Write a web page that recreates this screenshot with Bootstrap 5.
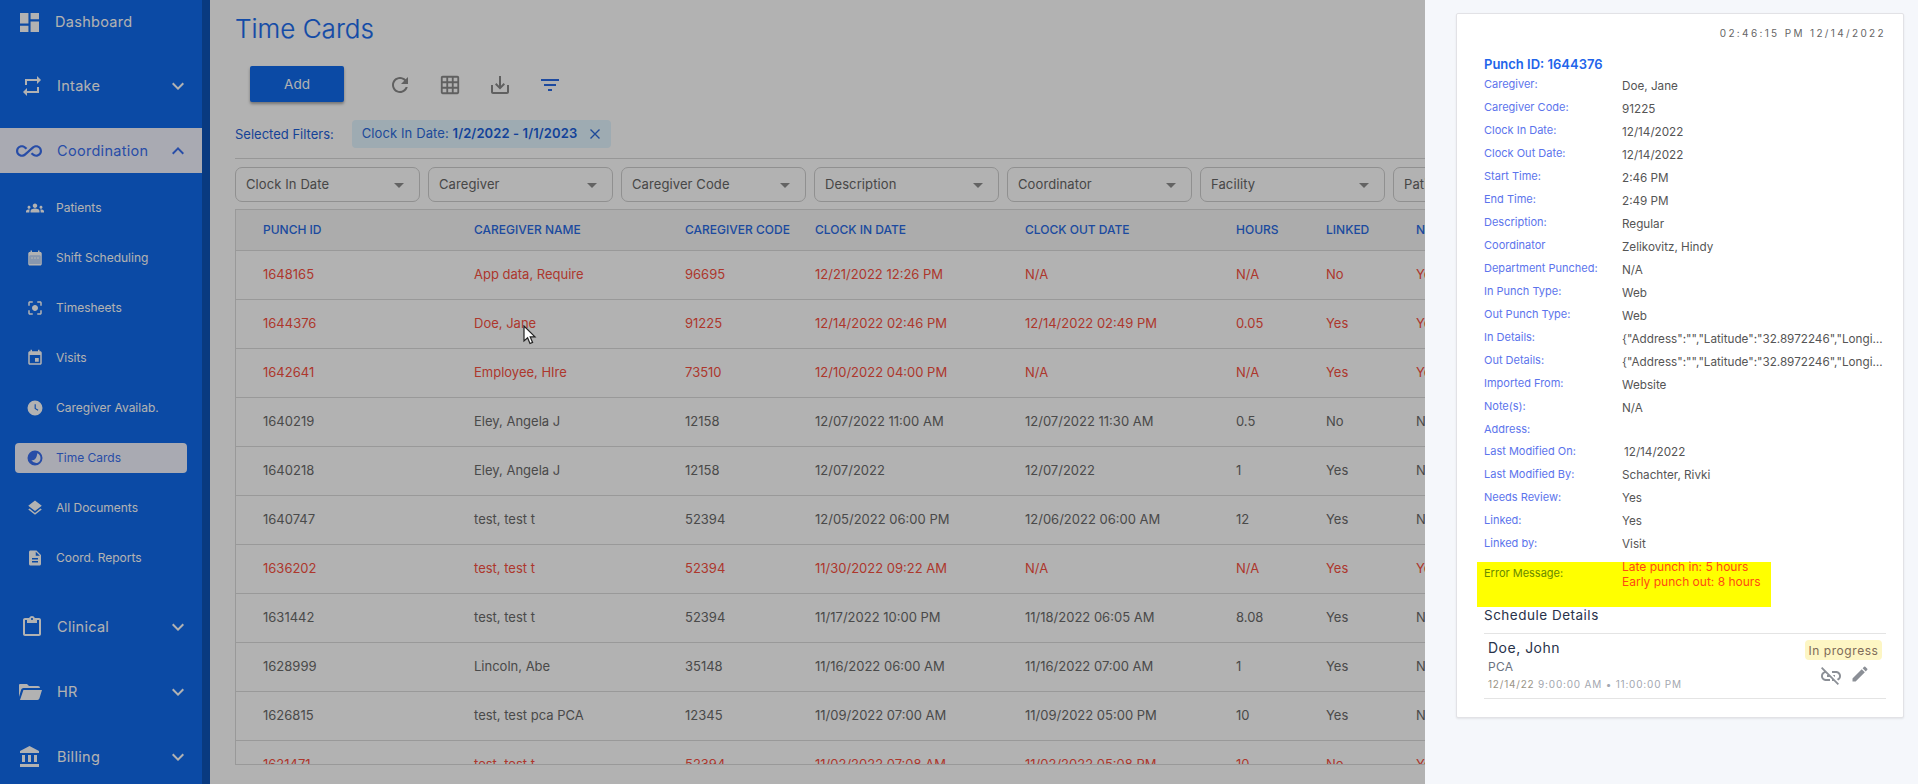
<!DOCTYPE html>
<html lang="en"><head><meta charset="utf-8"><title>Time Cards</title>
<link href="https://cdn.jsdelivr.net/npm/bootstrap@5.3.0/dist/css/bootstrap.min.css" rel="stylesheet">
<style>
html,body{height:784px;overflow:hidden}
body{font-family:Inter,"Liberation Sans",sans-serif;background:#fff;color:#555;position:relative;width:1918px}
.shell{height:784px}
.side{width:210px;flex:none;background:#106aec;border-right:8px solid #0e54b8;height:784px;overflow:hidden;color:#fff}
.tlink{height:45px;margin-bottom:20px;padding-left:20px;font-size:14.5px;letter-spacing:.3px;width:202px;position:relative}
.tlink .ti{width:37px;flex:none}
.tlink .chev{position:absolute;left:166px}
.tlink.on{background:#f2f4ff;color:#3a6ff0}
.tlink.first{height:43px;margin-bottom:20px;font-size:14.5px}
.tlink.first .ti{width:35px}
.tlink.wideic{padding-left:18px}
.tlink.wideic .ti{width:39px}
.tlink.on{padding-left:16px}
.tlink.on .ti{width:41px}
.sublist{padding:0 0 11px 15px}
.sublink{height:30px;margin-bottom:20px;width:172px;border-radius:4px;padding-left:11px;font-size:12px}
.sublink .si{width:30px;flex:none}
.sublink.on{background:#f2f4ff;color:#3a6ff0}
.workspace{flex:1;min-width:0;padding:0 0 0 25px;overflow:hidden}
.pagetitle{font-size:26px;font-weight:300;color:#1a6cf0;height:58px;margin:0;padding-top:12px;line-height:34px;-webkit-text-stroke:.2px}
.addbtn{width:94px;height:36px;background:#106aec;border:0;border-radius:2px;color:#fff;font-size:13.5px;box-shadow:0 2px 3px rgba(0,0,0,.35);margin:8px 0 0 15px;padding:0}
.tools{height:54px;gap:44px}
.toolset{gap:26px;margin-top:15px}
.toolic{width:24px;height:24px}
.filtline{height:39px;margin-top:8px;border-bottom:1px solid #d8d8d8;gap:18px;font-size:13px;color:#1e5fd8;width:1700px}
.filtlabel{line-height:28px}
.chipx{background:#e3f5ff;border-radius:4px;height:28px;padding:0 10px;font-size:13px;letter-spacing:.1px;color:#2c6bdc;gap:12px}
.chipx b{font-weight:600;color:#1a5fdc}
.fsel{width:185px;height:35px;border:1px solid #cfcfcf;border-radius:7px;padding:1px 10px 0;font-size:13px;color:#666;flex:none;letter-spacing:.1px}
.fsel i{width:0;height:0;border-left:5px solid transparent;border-right:5px solid transparent;border-top:5px solid #8f8f8f;display:block;margin-right:5px}
.fselrow{gap:8px;margin-top:8px;height:42px;width:1700px}
.gridwrap{width:1700px;height:556px;overflow:hidden;border-left:1px solid #dcdcdc;border-bottom:1px solid #dcdcdc;border-top:1px solid #dcdcdc;position:relative}
table.tc{table-layout:fixed;width:1500px;margin:0;font-size:13px;border-collapse:collapse}
table.tc th{height:40px;background:#f6f6f6;font-weight:500;color:#2a6be4;border-bottom:1px solid #dcdcdc;padding:0;text-transform:uppercase;font-size:12px;vertical-align:middle;white-space:nowrap}
table.tc td{height:49px;padding:0;border-bottom:1px solid #dcdcdc;vertical-align:middle;color:#6a6a6a;white-space:nowrap;background:transparent;box-shadow:none}
table.tc th:first-child,table.tc td:first-child{padding-left:27px}
table.tc tr.late td{color:#f8503f}
.c1{width:238px}.c2{width:211px}.c3{width:130px}.c4{width:210px}.c5{width:211px}.c6{width:90px}.c7{width:90px}.c8{width:320px}
.scrim{position:absolute;inset:0;background:rgba(0,0,0,.3);z-index:5}
.pointer{position:absolute;left:523px;top:325px;z-index:6}
.drawer{position:absolute;left:1425px;top:0;width:493px;height:784px;background:#f5f7fb;z-index:10;padding:13px 14px 0 31px}
.pcard{height:705px;background:#fff;border:1px solid #e2e2e6;box-shadow:0 1px 2px rgba(0,0,0,.08);border-radius:2px;padding:12px 17px 0 27px}
.stamp{font-size:10px;letter-spacing:2.35px;text-align:right;color:#666;line-height:14px;margin-bottom:16px}
.pid{font-size:13px;font-weight:600;color:#2264ea;line-height:16px;margin-bottom:3px}
.drow{height:23px;flex:none}
.drow.tight{height:22px}
.drow.tight~.drow .dv{padding-top:0}
.dl{width:138px;flex:none;font-size:11px;color:#5c74ec;line-height:18px}
.dv{font-size:11.7px;color:#555;line-height:20px;padding-top:1px;min-width:0;width:265px;white-space:nowrap;overflow:hidden;text-overflow:ellipsis}
.dv.nudged{padding-left:2px}
.errbox{background:#ff0;width:294px;height:45px;margin:5px 0 0 -7px;padding-left:7px}
.errbox .dl{color:#6a8a00;padding-top:2px}
.errbox .dv{color:#ff4a12;font-size:12px;line-height:15px;padding-top:0;width:auto;margin-top:-3px;overflow:visible}
.schedhead{font-size:13.5px;letter-spacing:.5px;color:#28324a;line-height:17px;margin-bottom:9px}
.schedrow{border-top:1px solid #e4e4e4;border-bottom:1px solid #e4e4e4;height:66px;width:402px;padding:5px 4px 0 4px}
.sname{font-size:14px;letter-spacing:.5px;color:#28324a;line-height:18px}
.srole{font-size:12px;letter-spacing:.3px;color:#6b7280;line-height:20px}
.stime{font-size:10px;letter-spacing:.8px;color:#a3a7b0;line-height:14px}
.stime span{color:#9a9486}
.pillx{background:#fdf6c4;color:#7d6b58;font-size:12px;letter-spacing:.55px;border-radius:4px;height:20px;line-height:21px;width:77px;text-align:center;margin-top:1px}
.acts{gap:7px;padding:4px 12px 0 0}
</style></head>
<body>
<div class="d-flex shell">
 <aside class="side">
  <div class="tlink first d-flex align-items-center"><span class="ti"><svg width="19" height="19" viewBox="3 3 18 18" fill="#fff"><path d="M3 13h8V3H3zm0 8h8v-6H3zm10 0h8V11h-8zm0-18v6h8V3z"/></svg></span><span>Dashboard</span></div>
  <div class="tlink d-flex align-items-center"><span class="ti"><svg width="24" height="24" viewBox="0 0 24 24" fill="#fff"><path d="M7 7h10v3l4-4-4-4v3H5v6h2zm10 10H7v-3l-4 4 4 4v-3h12v-6h-2z"/></svg></span><span>Intake</span><svg class="chev" width="24" height="24" viewBox="0 0 24 24" fill="#fff"><path d="M7.41 8.59 12 13.17l4.59-4.58L18 10l-6 6-6-6z"/></svg></div>
  <div class="tlink on d-flex align-items-center"><span class="ti"><svg width="26" height="26" viewBox="0 0 24 24" fill="#3a6ff0"><path d="M18.6 6.62c-1.44 0-2.8.56-3.77 1.53L12 10.66 10.48 12h.01L7.8 14.39c-.64.64-1.49.99-2.4.99-1.87 0-3.39-1.51-3.39-3.38S3.53 8.62 5.4 8.62c.91 0 1.76.35 2.44 1.03l1.13 1 1.51-1.34L9.22 8.2C8.2 7.18 6.84 6.62 5.4 6.62 2.42 6.62 0 9.04 0 12s2.42 5.38 5.4 5.38c1.44 0 2.8-.56 3.77-1.53l2.83-2.5.01.01L13.52 12h-.01l2.69-2.39c.64-.64 1.49-.99 2.4-.99 1.87 0 3.39 1.51 3.39 3.38s-1.52 3.38-3.39 3.38c-.9 0-1.76-.35-2.44-1.03l-1.14-1.01-1.51 1.34 1.27 1.12c1.02 1.01 2.37 1.57 3.82 1.57 2.98 0 5.4-2.41 5.4-5.38s-2.42-5.37-5.4-5.37z"/></svg></span><span>Coordination</span><svg class="chev" width="24" height="24" viewBox="0 0 24 24" fill="#3a6ff0"><path d="M7.41 15.41 12 10.83l4.59 4.58L18 14l-6-6-6 6z"/></svg></div>
  <div class="sublist">
   <div class="sublink d-flex align-items-center"><span class="si"><svg width="18" height="18" viewBox="0 0 24 24" fill="#fff"><path d="M12 12.75c1.63 0 3.07.39 4.24.9 1.08.48 1.76 1.56 1.76 2.73V18H6v-1.61c0-1.18.68-2.26 1.76-2.73 1.17-.52 2.61-.91 4.24-.91zM4 13c1.1 0 2-.9 2-2s-.9-2-2-2-2 .9-2 2 .9 2 2 2zm1.13 1.1c-.37-.06-.74-.1-1.13-.1-.99 0-1.93.21-2.78.58C.48 14.9 0 15.62 0 16.43V18h4.5v-1.61c0-.83.23-1.61.63-2.29zM20 13c1.1 0 2-.9 2-2s-.9-2-2-2-2 .9-2 2 .9 2 2 2zm4 3.43c0-.81-.48-1.53-1.22-1.85-.85-.37-1.79-.58-2.78-.58-.39 0-.76.04-1.13.1.4.68.63 1.46.63 2.29V18H24v-1.57zM12 6c1.66 0 3 1.34 3 3s-1.34 3-3 3-3-1.34-3-3 1.34-3 3-3z"/></svg></span>Patients</div>
   <div class="sublink d-flex align-items-center"><span class="si"><svg width="18" height="18" viewBox="0 0 24 24" fill="#fff"><path d="M9 11H7v2h2v-2zm4 0h-2v2h2v-2zm4 0h-2v2h2v-2zm2-7h-1V2h-2v2H8V2H6v2H5c-1.11 0-1.99.9-1.99 2L3 20c0 1.1.89 2 2 2h14c1.1 0 2-.9 2-2V6c0-1.1-.9-2-2-2zm0 16H5V9h14v11z"/><path d="M5 9h14v11H5z" opacity=".75"/></svg></span>Shift Scheduling</div>
   <div class="sublink d-flex align-items-center"><span class="si"><svg width="18" height="18" viewBox="0 0 24 24" fill="#fff"><path d="M5 15H3v4c0 1.1.9 2 2 2h4v-2H5v-4zM5 5h4V3H5c-1.1 0-2 .9-2 2v4h2V5zm14-2h-4v2h4v4h2V5c0-1.1-.9-2-2-2zm0 16h-4v2h4c1.1 0 2-.9 2-2v-4h-2v4zM12 8c-2.21 0-4 1.79-4 4s1.79 4 4 4 4-1.79 4-4-1.79-4-4-4z"/></svg></span>Timesheets</div>
   <div class="sublink d-flex align-items-center"><span class="si"><svg width="18" height="18" viewBox="0 0 24 24" fill="#fff"><path d="M17 12h-5v5h5v-5zM16 1v2H8V1H6v2H5c-1.11 0-1.99.9-1.99 2L3 19c0 1.1.89 2 2 2h14c1.1 0 2-.9 2-2V5c0-1.1-.9-2-2-2h-1V1h-2zm3 18H5V8h14v11z"/></svg></span>Visits</div>
   <div class="sublink d-flex align-items-center"><span class="si"><svg width="18" height="18" viewBox="0 0 24 24" fill="#fff"><path fill-rule="evenodd" d="M12 2a10 10 0 1 0 0 20 10 10 0 0 0 0-20zm-.5 5H13v5.2l3.5 2.1-.8 1.2L11.5 13z"/></svg></span>Caregiver Availab.</div>
   <div class="sublink on d-flex align-items-center"><span class="si"><svg width="18" height="18" viewBox="0 0 24 24" fill="#3a6ff0"><path fill-rule="evenodd" d="M12 2a10 10 0 1 0 0 20 10 10 0 0 0 0-20zm3 3.6a7 7 0 0 1-.2 13 8 8 0 0 1-7.6-3.6c3.5.4 7.2-1.8 7.8-9.4z"/></svg></span>Time Cards</div>
   <div class="sublink d-flex align-items-center"><span class="si"><svg width="18" height="18" viewBox="0 0 24 24" fill="#fff"><path d="m11.99 18.54-7.37-5.73L3 14.07l9 7 9-7-1.63-1.27-7.38 5.74zM12 16l7.36-5.73L21 9l-9-7-9 7 1.63 1.27L12 16z"/></svg></span>All Documents</div>
   <div class="sublink d-flex align-items-center"><span class="si"><svg width="18" height="18" viewBox="0 0 24 24" fill="#fff"><path d="M14 2H6c-1.1 0-1.99.9-1.99 2L4 20c0 1.1.89 2 1.99 2H18c1.1 0 2-.9 2-2V8l-6-6zm2 16H8v-2h8v2zm0-4H8v-2h8v2zm-3-5V3.5L18.5 9H13z"/></svg></span>Coord. Reports</div>
  </div>
  <div class="tlink d-flex align-items-center"><span class="ti"><svg width="24" height="24" viewBox="0 0 24 24" fill="#fff"><path d="M19 3h-4.18C14.4 1.84 13.3 1 12 1s-2.4.84-2.82 2H5c-1.1 0-2 .9-2 2v14c0 1.1.9 2 2 2h14c1.1 0 2-.9 2-2V5c0-1.1-.9-2-2-2zm-7 0c.55 0 1 .45 1 1s-.45 1-1 1-1-.45-1-1 .45-1 1-1zm7 16H5V5h2v3h10V5h2v14z"/></svg></span><span>Clinical</span><svg class="chev" width="24" height="24" viewBox="0 0 24 24" fill="#fff"><path d="M7.41 8.59 12 13.17l4.59-4.58L18 10l-6 6-6-6z"/></svg></div>
  <div class="tlink wideic d-flex align-items-center"><span class="ti"><svg width="24" height="24" viewBox="0 0 24 24" fill="#fff"><path d="M2 4h7l2 2h9a2 2 0 0 1 2 2H5.500A2.500 2.500 0 0 0 3.100 9.800L1 17V5a1 1 0 0 1 1-1zm3.400 6H24l-2.600 8.600a2 2 0 0 1-1.900 1.400H2z"/></svg></span><span>HR</span><svg class="chev" width="24" height="24" viewBox="0 0 24 24" fill="#fff"><path d="M7.41 8.59 12 13.17l4.59-4.58L18 10l-6 6-6-6z"/></svg></div>
  <div class="tlink wideic d-flex align-items-center"><span class="ti"><svg width="24" height="24" viewBox="0 0 24 24" fill="#fff"><path d="M4 10v7h3v-7H4zm6 0v7h3v-7h-3zM2 22h19v-3H2v3zm14-12v7h3v-7h-3zM11.500 1 2 6v2h19V6l-9.500-5z"/></svg></span><span>Billing</span><svg class="chev" width="24" height="24" viewBox="0 0 24 24" fill="#fff"><path d="M7.41 8.59 12 13.17l4.59-4.58L18 10l-6 6-6-6z"/></svg></div>
 </aside>
 <main class="workspace">
  <h1 class="pagetitle">Time Cards</h1>
  <div class="d-flex tools align-items-start">
   <button class="addbtn" type="button">Add</button>
   <div class="d-flex toolset">
    <span class="toolic d-flex align-items-center justify-content-center"><svg width="24" height="24" viewBox="0 0 24 24" fill="#8a8a8a"><path d="M17.65 6.35C16.2 4.9 14.21 4 12 4c-4.420 0-7.990 3.580-7.990 8s3.570 8 7.990 8c3.730 0 6.840-2.550 7.730-6h-2.080c-.820 2.330-3.040 4-5.650 4-3.310 0-6-2.690-6-6s2.690-6 6-6c1.660 0 3.140.690 4.220 1.780L13 11h7V4l-2.350 2.350z"/></svg></span>
    <span class="toolic d-flex align-items-center justify-content-center"><svg width="22" height="22" viewBox="0 0 24 24" fill="#8a8a8a"><path d="M20 2H4c-1.100 0-2 .9-2 2v16c0 1.100.9 2 2 2h16c1.100 0 2-.9 2-2V4c0-1.100-.9-2-2-2zM8 20H4v-4h4v4zm0-6H4v-4h4v4zm0-6H4V4h4v4zm6 12h-4v-4h4v4zm0-6h-4v-4h4v4zm0-6h-4V4h4v4zm6 12h-4v-4h4v4zm0-6h-4v-4h4v4zm0-6h-4V4h4v4z"/></svg></span>
    <span class="toolic d-flex align-items-center justify-content-center"><svg width="24" height="24" viewBox="0 0 24 24" fill="#8a8a8a"><path d="M19 12v7H5v-7H3v7c0 1.100.9 2 2 2h14c1.100 0 2-.9 2-2v-7h-2zm-6 .67 2.590-2.580L17 11.500l-5 5-5-5 1.410-1.410L11 12.670V3h2z"/></svg></span>
    <span class="toolic d-flex align-items-center justify-content-center"><svg width="24" height="24" viewBox="0 0 24 24" fill="#2a6be4"><path d="M10 18h4v-2h-4v2zM3 6v2h18V6H3zm3 7h12v-2H6v2z"/></svg></span>
   </div>
  </div>
  <div class="d-flex filtline align-items-start">
   <span class="filtlabel">Selected Filters:</span>
   <span class="chipx d-inline-flex align-items-center"><span>Clock In Date: <b>1/2/2022 - 1/1/2023</b></span><svg width="12" height="12" viewBox="0 0 12 12" stroke="#2c6bdc" stroke-width="1.400" fill="none"><path d="M1.500 1.500l9 9M10.500 1.500l-9 9"/></svg></span>
  </div>
  <div class="d-flex fselrow">
   <div class="fsel d-flex align-items-center justify-content-between">Clock In Date<i></i></div>
   <div class="fsel d-flex align-items-center justify-content-between">Caregiver<i></i></div>
   <div class="fsel d-flex align-items-center justify-content-between">Caregiver Code<i></i></div>
   <div class="fsel d-flex align-items-center justify-content-between">Description<i></i></div>
   <div class="fsel d-flex align-items-center justify-content-between">Coordinator<i></i></div>
   <div class="fsel d-flex align-items-center justify-content-between">Facility<i></i></div>
   <div class="fsel d-flex align-items-center justify-content-between">Patient<i></i></div>
  </div>
  <div class="gridwrap">
   <table class="table tc">
    <colgroup><col class="c1"><col class="c2"><col class="c3"><col class="c4"><col class="c5"><col class="c6"><col class="c7"><col class="c8"></colgroup>
    <thead><tr><th>Punch ID</th><th>Caregiver Name</th><th>Caregiver Code</th><th>Clock In Date</th><th>Clock Out Date</th><th>Hours</th><th>Linked</th><th>Needs Review</th></tr></thead>
    <tbody>
     <tr class="late"><td>1648165</td><td>App data, Require</td><td>96695</td><td>12/21/2022 12:26 PM</td><td>N/A</td><td>N/A</td><td>No</td><td>Yes</td></tr>
     <tr class="late"><td>1644376</td><td>Doe, Jane</td><td>91225</td><td>12/14/2022 02:46 PM</td><td>12/14/2022 02:49 PM</td><td>0.05</td><td>Yes</td><td>Yes</td></tr>
     <tr class="late"><td>1642641</td><td>Employee, HIre</td><td>73510</td><td>12/10/2022 04:00 PM</td><td>N/A</td><td>N/A</td><td>Yes</td><td>Yes</td></tr>
     <tr><td>1640219</td><td>Eley, Angela J</td><td>12158</td><td>12/07/2022 11:00 AM</td><td>12/07/2022 11:30 AM</td><td>0.5</td><td>No</td><td>No</td></tr>
     <tr><td>1640218</td><td>Eley, Angela J</td><td>12158</td><td>12/07/2022</td><td>12/07/2022</td><td>1</td><td>Yes</td><td>No</td></tr>
     <tr><td>1640747</td><td>test, test t</td><td>52394</td><td>12/05/2022 06:00 PM</td><td>12/06/2022 06:00 AM</td><td>12</td><td>Yes</td><td>No</td></tr>
     <tr class="late"><td>1636202</td><td>test, test t</td><td>52394</td><td>11/30/2022 09:22 AM</td><td>N/A</td><td>N/A</td><td>Yes</td><td>Yes</td></tr>
     <tr><td>1631442</td><td>test, test t</td><td>52394</td><td>11/17/2022 10:00 PM</td><td>11/18/2022 06:05 AM</td><td>8.08</td><td>Yes</td><td>No</td></tr>
     <tr><td>1628999</td><td>Lincoln, Abe</td><td>35148</td><td>11/16/2022 06:00 AM</td><td>11/16/2022 07:00 AM</td><td>1</td><td>Yes</td><td>No</td></tr>
     <tr><td>1626815</td><td>test, test pca PCA</td><td>12345</td><td>11/09/2022 07:00 AM</td><td>11/09/2022 05:00 PM</td><td>10</td><td>Yes</td><td>No</td></tr>
     <tr class="late"><td>1621471</td><td>test, test t</td><td>52394</td><td>11/02/2022 07:08 AM</td><td>11/02/2022 05:08 PM</td><td>10</td><td>No</td><td>Yes</td></tr>
    </tbody>
   </table>
  </div>
 </main>
</div>
<div class="scrim"></div>
<svg class="pointer" width="14" height="20" viewBox="0 0 14 20"><path d="M1 1v15l3.600-3.200 2.400 5.700 2.600-1.100-2.400-5.500H12z" fill="#fff" stroke="#222" stroke-width="1.200"/></svg>
<aside class="drawer">
 <div class="pcard">
  <div class="stamp">02:46:15 PM 12/14/2022</div>
  <div class="pid">Punch ID: 1644376</div>
  <div class="drow d-flex"><div class="dl">Caregiver:</div><div class="dv">Doe, Jane</div></div>
  <div class="drow d-flex"><div class="dl">Caregiver Code:</div><div class="dv">91225</div></div>
  <div class="drow d-flex"><div class="dl">Clock In Date:</div><div class="dv">12/14/2022</div></div>
  <div class="drow d-flex"><div class="dl">Clock Out Date:</div><div class="dv">12/14/2022</div></div>
  <div class="drow d-flex"><div class="dl">Start Time:</div><div class="dv">2:46 PM</div></div>
  <div class="drow d-flex"><div class="dl">End Time:</div><div class="dv">2:49 PM</div></div>
  <div class="drow d-flex"><div class="dl">Description:</div><div class="dv">Regular</div></div>
  <div class="drow d-flex"><div class="dl">Coordinator</div><div class="dv">Zelikovitz, Hindy</div></div>
  <div class="drow d-flex"><div class="dl">Department Punched:</div><div class="dv">N/A</div></div>
  <div class="drow d-flex"><div class="dl">In Punch Type:</div><div class="dv">Web</div></div>
  <div class="drow d-flex"><div class="dl">Out Punch Type:</div><div class="dv">Web</div></div>
  <div class="drow d-flex"><div class="dl">In Details:</div><div class="dv">{"Address":"","Latitude":"32.8972246","Longitude":"-96.9"}</div></div>
  <div class="drow d-flex"><div class="dl">Out Details:</div><div class="dv">{"Address":"","Latitude":"32.8972246","Longitude":"-96.9"}</div></div>
  <div class="drow d-flex"><div class="dl">Imported From:</div><div class="dv">Website</div></div>
  <div class="drow d-flex"><div class="dl">Note(s):</div><div class="dv">N/A</div></div>
  <div class="drow tight d-flex"><div class="dl">Address:</div><div class="dv"></div></div>
  <div class="drow d-flex"><div class="dl">Last Modified On:</div><div class="dv nudged">12/14/2022</div></div>
  <div class="drow d-flex"><div class="dl">Last Modified By:</div><div class="dv">Schachter, Rivki</div></div>
  <div class="drow d-flex"><div class="dl">Needs Review:</div><div class="dv">Yes</div></div>
  <div class="drow d-flex"><div class="dl">Linked:</div><div class="dv">Yes</div></div>
  <div class="drow d-flex"><div class="dl">Linked by:</div><div class="dv">Visit</div></div>
  <div class="errbox d-flex"><div class="dl">Error Message:</div><div class="dv">Late punch in: 5 hours<br>Early punch out: 8 hours</div></div>
  <div class="schedhead">Schedule Details</div>
  <div class="schedrow d-flex justify-content-between">
   <div><div class="sname">Doe, John</div><div class="srole">PCA</div><div class="stime"><span>12/14/22</span> 9:00:00 AM • 11:00:00 PM</div></div>
   <div class="d-flex flex-column align-items-end">
    <div class="pillx">In progress</div>
    <div class="d-flex acts align-items-start">
     <svg width="24" height="24" viewBox="0 0 24 24" fill="#8b8f96"><path d="M17 7h-4v1.900h4c1.710 0 3.100 1.390 3.100 3.100 0 1.430-.980 2.630-2.310 2.980l1.460 1.460C20.880 15.610 22 13.950 22 12c0-2.760-2.240-5-5-5zm-1 4h-2.190l2 2H16zM2 4.270l3.110 3.110A4.991 4.991 0 0 0 2 12c0 2.760 2.240 5 5 5h4v-1.900H7c-1.710 0-3.100-1.390-3.100-3.100 0-1.590 1.210-2.900 2.760-3.070L8.730 11H8v2h2.730L13 15.270V17h1.730l4.010 4L20 19.740 3.270 3 2 4.270z"/></svg>
     <svg width="20" height="20" viewBox="0 0 24 24" fill="#8b8f96"><path d="M3 17.250V21h3.750L17.810 9.940l-3.750-3.750L3 17.250zM20.710 7.040a1 1 0 0 0 0-1.410l-2.340-2.340a1 1 0 0 0-1.410 0l-1.830 1.830 3.750 3.750 1.830-1.830z"/></svg>
    </div>
   </div>
  </div>
 </div>
</aside>
<script src="https://cdn.jsdelivr.net/npm/bootstrap@5.3.0/dist/js/bootstrap.bundle.min.js"></script>
</body></html>
